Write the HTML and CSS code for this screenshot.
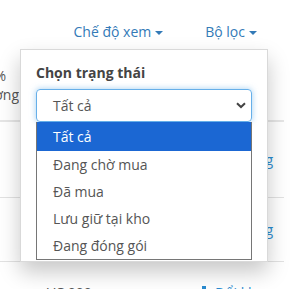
FILE: index.html
```
<!DOCTYPE html>
<html>
<head>
  <meta charset="UTF-8">
  <title>Đơn hàng</title>
  <link rel="stylesheet" href="styles.css">
</head>
<body>
  <div class="page">
    <div class="toolbar">
      <a class="nav-link">Chế độ xem <span class="caret"></span></a>
      <a class="nav-link">Bộ lọc <span class="caret"></span></a>
    </div>

    <div class="table">
      <div class="row head">
        <div class="cell-left">
          <span class="short">Tỷ lệ %</span>
          <span>Số lượng</span>
        </div>
      </div>
      <div class="row r1">
        <div class="cell-left"></div>
        <div class="cell-right"><a class="link">Đổi trạng thái đang</a></div>
      </div>
      <div class="row r2">
        <div class="cell-left"></div>
        <div class="cell-right"><a class="link">Đổi trạng thái đang</a></div>
      </div>
      <div class="row r3">
        <span class="money">VC 000</span>
        <a class="link move"><span class="bar"></span>Đổi kho</a>
      </div>
    </div>

    <!-- menu bộ lọc đang mở -->
    <div class="filter-menu">
      <div class="filter-title">Chọn trạng thái</div>
      <div class="select">
        <span>Tất cả</span>
        <svg width="10" height="7" viewBox="0 0 10 7"><path d="M1 1.2 L5 5 L9 1.2" fill="none" stroke="#444" stroke-width="2"/></svg>
      </div>
      <ul class="options">
        <li class="active">Tất cả</li>
        <li>Đang chờ mua</li>
        <li>Đã mua</li>
        <li>Lưu giữ tại kho</li>
        <li>Đang đóng gói</li>
      </ul>
    </div>
  </div>
</body>
</html>
```

FILE: styles.css
```
body { margin: 0; font-family: "Open Sans", "Noto Sans", sans-serif; font-size: 14px; line-height: 20px; color: #555; background: #fff; overflow: hidden; }
.page { position: relative; width: 298px; height: 289px; overflow: hidden; }

.toolbar { display: flex; justify-content: flex-end; gap: 42px; padding: 22px 41px 0 0; height: 20px; }
.nav-link { color: #337ab7; display: flex; align-items: center; gap: 4px; }
.caret { display: inline-block; width: 0; height: 0; border-top: 4px solid #337ab7; border-left: 4px solid transparent; border-right: 4px solid transparent; margin-top: 2px; }

.table { width: 284px; }
.row { display: flex; justify-content: space-between; border-bottom: 1px solid #e2e2e2; }
.head { padding: 24px 0 16px; border-bottom: 2px solid #e6e6e6; line-height: 19px; }
.r1 { height: 75px; align-items: center; }
.r2 { height: 63px; align-items: center; }
.r3 { border-bottom: 0; padding: 21px 0 0 47px; justify-content: flex-start; }
.cell-left { width: 19px; overflow: hidden; display: flex; flex-direction: column; align-items: flex-end; white-space: nowrap; }
.cell-left .short { padding-right: 13px; }
.cell-right { width: 273px; overflow: hidden; display: flex; justify-content: flex-end; white-space: nowrap; padding-right: 11px; }
.link { color: #2a8bd0; }
.money { width: 155px; }
.move { display: flex; align-items: center; gap: 9px; }
.bar { width: 4px; height: 14px; background: #2a8bd0; }

.filter-menu { position: absolute; top: 49px; left: 20px; width: 216px; padding: 13px 15px 1px; background: #fff; border: 1px solid rgba(0,0,0,.15); box-shadow: 0 10px 20px rgba(0,0,0,.22); }
.filter-title { font-weight: bold; color: #444; margin-bottom: 6px; }
.select { height: 31px; display: flex; align-items: center; justify-content: space-between; padding: 0 5px 0 16px; border: 1px solid #66afe9; border-radius: 4px; box-shadow: 0 0 6px rgba(102,175,233,.6); color: #555; }
.options { list-style: none; margin: 0; padding: 0; border: 1px solid #767676; border-top: 0; color: #555; }
.options li { height: 27px; line-height: 27px; padding-left: 16px; }
.options li.active { height: 29px; line-height: 29px; background: #1b67d3; color: #fff; }
```
